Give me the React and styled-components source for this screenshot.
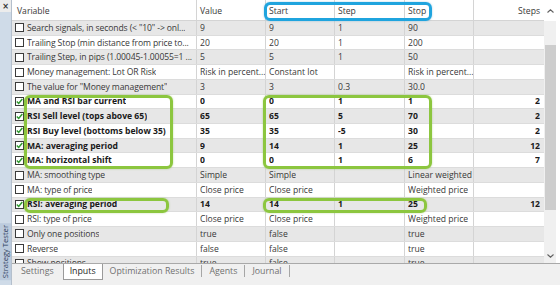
import React from "react";
import styled, { createGlobalStyle } from "styled-components";

const ROW_H = 14.73;
const HEAD_H = 21;

const GlobalStyle = createGlobalStyle`
  html, body {
    margin: 0;
    padding: 0;
    background: #ffffff;
    overflow: hidden;
  }
  body {
    font-family: "Open Sans", "Noto Sans", sans-serif;
  }
`;

const rows = [
  { name: 'Search signals, in seconds (< "10" -> onl...', v: "9", start: "9", step: "1", stop: "90" },
  { name: "Trailing Stop (min distance from price to...", v: "20", start: "20", step: "1", stop: "200" },
  { name: "Trailing Step, in pips (1.00045-1.00055=1 ...", v: "5", start: "5", step: "1", stop: "50" },
  { name: "Money management: Lot OR Risk", v: "Risk in percent...", start: "Constant lot", step: "", stop: "Risk in percent..." },
  { name: 'The value for "Money management"', v: "3", start: "3", step: "0.3", stop: "30.0" },
  { name: "MA and RSI bar current", v: "0", start: "0", step: "1", stop: "1", steps: "2", on: true },
  { name: "RSI Sell level (tops above 65)", v: "65", start: "65", step: "5", stop: "70", steps: "2", on: true },
  { name: "RSI Buy level (bottoms below 35)", v: "35", start: "35", step: "-5", stop: "30", steps: "2", on: true },
  { name: "MA: averaging period", v: "9", start: "14", step: "1", stop: "25", steps: "12", on: true },
  { name: "MA: horizontal shift", v: "0", start: "0", step: "1", stop: "6", steps: "7", on: true },
  { name: "MA: smoothing type", v: "Simple", start: "Simple", step: "", stop: "Linear weighted" },
  { name: "MA: type of price", v: "Close price", start: "Close price", step: "", stop: "Weighted price" },
  { name: "RSI: averaging period", v: "14", start: "14", step: "1", stop: "25", steps: "12", on: true },
  { name: "RSI: type of price", v: "Close price", start: "Close price", step: "", stop: "Weighted price" },
  { name: "Only one positions", v: "true", start: "false", step: "", stop: "true" },
  { name: "Reverse", v: "false", start: "false", step: "", stop: "true" },
  { name: "Show positions", v: "true", start: "false", step: "", stop: "true" },
];

const marks = [
  { color: "blue", x: 252, top: 2, w: 168, h: 19 },
  { color: "green", x: 12, from: 6, to: 10, w: 149 },
  { color: "green", x: 251, from: 6, to: 10, w: 169 },
  { color: "green", x: 12, from: 13, to: 13, w: 145 },
  { color: "green", x: 251, from: 13, to: 13, w: 164 },
];

const tabs = ["Settings", "Inputs", "Optimization Results", "Agents", "Journal"];
const ACTIVE = 1;

const Frame = styled.div`
  display: flex;
  width: 560px;
  height: 285px;
  overflow: hidden;
  font-size: 8.6px;
  color: #3a3a3a;
`;

const Strip = styled.div`
  width: 11px;
  display: flex;
  flex-direction: column;
  border-right: 1px solid #b4bfcc;
  background: #cfdbe8;
`;

const CloseBox = styled.div`
  height: 12px;
  background: #ececec;
  display: flex;
  align-items: center;
  justify-content: center;
  font-family: "DejaVu Sans", sans-serif;
  font-weight: bold;
  font-size: 8px;
  color: #333;
`;

const StripFill = styled.div`
  flex: 1;
  display: flex;
  flex-direction: column;
  justify-content: flex-end;
  padding-bottom: 5px;
`;

const StripLabel = styled.div`
  writing-mode: vertical-rl;
  transform: rotate(180deg);
  align-self: center;
  font-size: 7.6px;
  line-height: 11px;
  color: #2d3d5c;
  background: #bccbdd;
  padding: 2px 0;
  width: 11px;
  display: flex;
  align-items: center;
`;

const Panel = styled.div`
  flex: 1;
  display: flex;
  flex-direction: column;
`;

const GridArea = styled.div`
  height: 264px;
  flex: none;
  display: flex;
  overflow: hidden;
  border-bottom: 1px solid #a9a9a9;
  box-sizing: border-box;
`;

const Table = styled.div`
  position: relative;
  width: 532px;
  display: flex;
  flex-direction: column;
  overflow: hidden;
`;

const Row = styled.div`
  display: grid;
  grid-template-columns: 185px 69px 69px 70px 69px 70px;
  flex: none;
  height: ${(p) => (p.$head ? HEAD_H : ROW_H)}px;
  box-sizing: border-box;
  border-bottom: 1px solid ${(p) => (p.$head ? "#d4d4d4" : "#dcdcdc")};
  background: ${(p) => (p.$alt ? "#e7e7e7" : "#ffffff")};
  font-weight: ${(p) => (p.$bold ? 700 : 400)};
  color: ${(p) => (p.$bold ? "#1a1a1a" : "#383838")};
`;

const Cell = styled.div`
  display: flex;
  align-items: center;
  gap: 3px;
  padding: ${(p) => (p.$head ? "2px" : "0")} ${(p) => (p.$right ? "4px" : "0")} 0 3px;
  border-right: 1px solid #d4d4d4;
  white-space: nowrap;
  overflow: hidden;
  justify-content: ${(p) => (p.$right ? "flex-end" : "flex-start")};
  &:first-child {
    padding-left: ${(p) => (p.$head ? "5px" : "3px")};
  }
  &:last-child {
    border-right: none;
  }
`;

const CellText = styled.span`
  overflow: hidden;
  text-overflow: clip;
  letter-spacing: ${(p) => (p.$tight ? "-0.12px" : "0")};
`;

const Box = styled.span`
  flex: none;
  width: 9px;
  height: 9px;
  box-sizing: border-box;
  border: 1px solid #3b3b3b;
  background: #ffffff;
  display: flex;
  align-items: center;
  justify-content: center;
`;

const Mark = styled.div`
  position: absolute;
  left: ${(p) => p.$x}px;
  top: ${(p) => p.$top}px;
  width: ${(p) => p.$w}px;
  height: ${(p) => p.$h}px;
  box-sizing: border-box;
  border: 3px solid ${(p) => (p.$color === "blue" ? "#1fa4de" : "#8cc63f")};
  border-radius: 6px;
  box-shadow: 0 0 2px
    ${(p) => (p.$color === "blue" ? "rgba(30,140,200,0.45)" : "rgba(110,170,40,0.45)")};
  pointer-events: none;
`;

const ScrollBar = styled.div`
  width: 12px;
  display: flex;
  flex-direction: column;
  background: #f0f0f0;
`;

const ArrowCell = styled.div`
  height: ${(p) => p.$h}px;
  flex: none;
  display: flex;
  align-items: center;
  justify-content: center;
  background: ${(p) => (p.$white ? "#ffffff" : "transparent")};
`;

const Track = styled.div`
  flex: 1;
  padding: 24px 0 0 1px;
`;

const Thumb = styled.div`
  height: 165px;
  background: #cdcdcd;
`;

const Gutter = styled.div`
  width: 4px;
  background: #ffffff;
`;

const TabBar = styled.div`
  flex: 1;
  display: flex;
  align-items: flex-start;
  padding-left: 2px;
  background: #f0f0f0;
`;

const Tab = styled.div`
  padding: 0 ${(p) => (p.$active ? 6 : 7)}px;
  height: ${(p) => (p.$active ? 15 : 14)}px;
  display: flex;
  align-items: center;
  line-height: 1;
  margin-right: ${(p) => (p.$beforeActive ? 2 : 0)}px;
  color: ${(p) => (p.$active ? "#1e1e1e" : "#707070")};
  background: ${(p) => (p.$active ? "#ffffff" : "transparent")};
  border: ${(p) => (p.$active ? "1px solid #9a9a9a" : "none")};
  border-top: none;
  font-size: 8.8px;
  white-space: nowrap;
`;

const Sep = styled.div`
  width: 1px;
  height: 12px;
  margin-top: 1px;
  background: #a6a6a6;
`;

const Check = () => (
  <svg width="7" height="7" viewBox="0 0 7 7">
    <path d="M0.8 3.4 L2.7 5.4 L6.3 1" fill="none" stroke="#2f9a2f" strokeWidth="1.5" />
  </svg>
);

const Chevron = ({ up }) => (
  <svg width="7" height="4" viewBox="0 0 7 4">
    <polyline
      points={up ? "0.5,3.5 3.5,0.8 6.5,3.5" : "0.5,0.5 3.5,3.2 6.5,0.5"}
      fill="none"
      stroke="#606060"
      strokeWidth="1.1"
    />
  </svg>
);

const rowTop = (i) => HEAD_H + (i - 1) * ROW_H;

export default function App() {
  return (
    <>
      <GlobalStyle />
      <Frame>
        <Strip>
          <CloseBox>×</CloseBox>
          <StripFill>
            <StripLabel>Strategy Tester</StripLabel>
          </StripFill>
        </Strip>
        <Panel>
          <GridArea>
            <Table>
              <Row $head>
                <Cell $head>Variable</Cell>
                <Cell $head>Value</Cell>
                <Cell $head>Start</Cell>
                <Cell $head>Step</Cell>
                <Cell $head>Stop</Cell>
                <Cell $head $right>Steps</Cell>
              </Row>
              {rows.map((r, i) => (
                <Row key={r.name} $alt={i % 2 === 0} $bold={r.on}>
                  <Cell>
                    <Box>{r.on && <Check />}</Box>
                    <CellText $tight={!r.on}>{r.name}</CellText>
                  </Cell>
                  <Cell><CellText>{r.v}</CellText></Cell>
                  <Cell><CellText>{r.start}</CellText></Cell>
                  <Cell><CellText>{r.step}</CellText></Cell>
                  <Cell><CellText>{r.stop}</CellText></Cell>
                  <Cell $right><CellText>{r.steps || ""}</CellText></Cell>
                </Row>
              ))}
              {marks.map((m, i) => (
                <Mark
                  key={i}
                  $color={m.color}
                  $x={m.x}
                  $w={m.w}
                  $top={m.from ? rowTop(m.from) : m.top}
                  $h={m.from ? (m.to - m.from + 1) * ROW_H + 1 : m.h}
                />
              ))}
            </Table>
            <ScrollBar>
              <ArrowCell $h={HEAD_H} $white>
                <Chevron up />
              </ArrowCell>
              <Track>
                <Thumb />
              </Track>
              <ArrowCell $h={14}>
                <Chevron />
              </ArrowCell>
            </ScrollBar>
            <Gutter />
          </GridArea>
          <TabBar>
            {tabs.map((t, i) => (
              <React.Fragment key={t}>
                <Tab $active={i === ACTIVE} $beforeActive={i === ACTIVE - 1}>
                  {t}
                </Tab>
                {i !== ACTIVE && i !== ACTIVE - 1 && <Sep />}
              </React.Fragment>
            ))}
          </TabBar>
        </Panel>
      </Frame>
    </>
  );
}
